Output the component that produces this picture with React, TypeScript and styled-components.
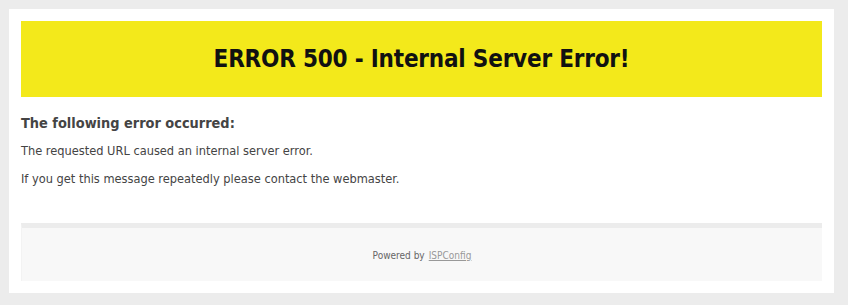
import React from "react";
import styled, { createGlobalStyle } from "styled-components";

const Global = createGlobalStyle`
  html, body { margin: 0; padding: 0; }
  body {
    background: #ececec;
    font-family: "DejaVu Sans Condensed", "DejaVu Sans", sans-serif;
    color: #444;
  }
`;

const Page = styled.div`
  padding: 9px;
`;

const Card = styled.div`
  width: 825px;
  height: 284px;
  box-sizing: border-box;
  background: #fff;
  padding: 12px;
  display: flex;
  flex-direction: column;
`;

const Banner = styled.div`
  height: 76px;
  background: #f3e91b;
  display: flex;
  align-items: center;
  justify-content: center;
`;

const Title = styled.h1`
  margin: 0;
  font-size: 24px;
  letter-spacing: -0.2px;
  font-weight: bold;
  color: #111;
`;

const Content = styled.div`
  padding-top: 17px;
  flex: 1;
`;

const Heading = styled.h2`
  margin: 0 0 10px;
  font-size: 14.4px;
  line-height: 18px;
  font-weight: bold;
  color: #444;
`;

const Para = styled.p`
  margin: 0 0 10px;
  font-size: 12.7px;
  line-height: 18px;
  color: #444;
`;

const Footer = styled.div`
  flex: none;
  border-top: 5px solid #ececec;
  border-left: 1px solid #f3f3f3;
  background: #f8f8f8;
  height: 51px;
  padding-top: 2px;
  box-sizing: content-box;
  display: flex;
  align-items: center;
  justify-content: center;
  font-size: 10px;
  color: #666;
`;

const Link = styled.a`
  color: #999;
  text-decoration: underline;
  margin-left: 4px;
`;

export default function App() {
  return (
    <>
      <Global />
      <Page>
        <Card>
          <Banner>
            <Title>ERROR 500 - Internal Server Error!</Title>
          </Banner>
          <Content>
            <Heading>The following error occurred:</Heading>
            <Para>The requested URL caused an internal server error.</Para>
            <Para>If you get this message repeatedly please contact the webmaster.</Para>
          </Content>
          <Footer>
            Powered by<Link href="#">ISPConfig</Link>
          </Footer>
        </Card>
      </Page>
    </>
  );
}
